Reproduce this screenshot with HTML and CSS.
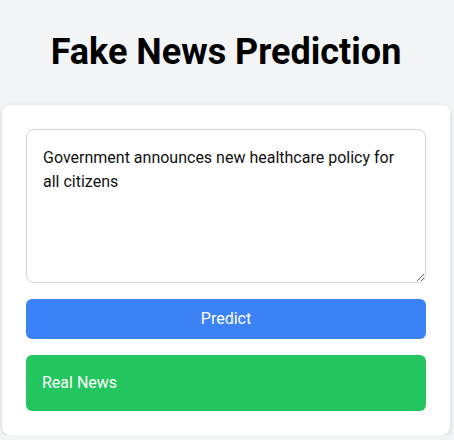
FILE: index.html
```html
<!DOCTYPE html>
<html lang="en">
<head>
<meta charset="utf-8">
<title>Fake News Prediction</title>
<link rel="stylesheet" href="styles.css">
</head>
<body>
  <h1 class="title">Fake News Prediction</h1>
  <div class="card">
    <textarea class="news-input">Government announces new healthcare policy for all citizens</textarea>
    <button class="predict-btn">Predict</button>
    <div class="result">Real News</div>
  </div>
</body>
</html>
```

FILE: styles.css
```css
* { box-sizing: border-box; }
html, body { margin: 0; padding: 0; }
body {
  background: #f3f4f6;
  font-family: Roboto, "Noto Sans", sans-serif;
  padding: 32px 2px 0 0;
}
.title {
  margin: 0 0 33px;
  text-align: center;
  font-size: 36px;
  line-height: 40px;
  font-weight: 700;
  color: #000;
}
.card {
  width: 448px;
  margin: 0 auto;
  background: #fff;
  border-radius: 8px;
  box-shadow: 0 2px 6px rgba(0,0,0,0.1), 0 1px 3px rgba(0,0,0,0.06);
  padding: 24px;
  display: flex;
  flex-direction: column;
  gap: 16px;
}
.news-input {
  display: block;
  width: 100%;
  height: 154px;
  border: 1px solid #d1d5db;
  border-radius: 8px;
  padding: 16px;
  font-family: Roboto, "Noto Sans", sans-serif;
  font-size: 16px;
  line-height: 24px;
  color: #111;
  resize: vertical;
  margin: 0;
}
.predict-btn {
  height: 40px;
  border: none;
  border-radius: 6px;
  background: #3b82f6;
  color: #fff;
  font-family: Roboto, "Noto Sans", sans-serif;
  font-size: 16px;
  line-height: 24px;
  padding: 8px;
  margin: 0;
}
.result {
  background: #22c55e;
  color: #fff;
  border-radius: 6px;
  padding: 16px;
  font-size: 16px;
  line-height: 24px;
}
```
